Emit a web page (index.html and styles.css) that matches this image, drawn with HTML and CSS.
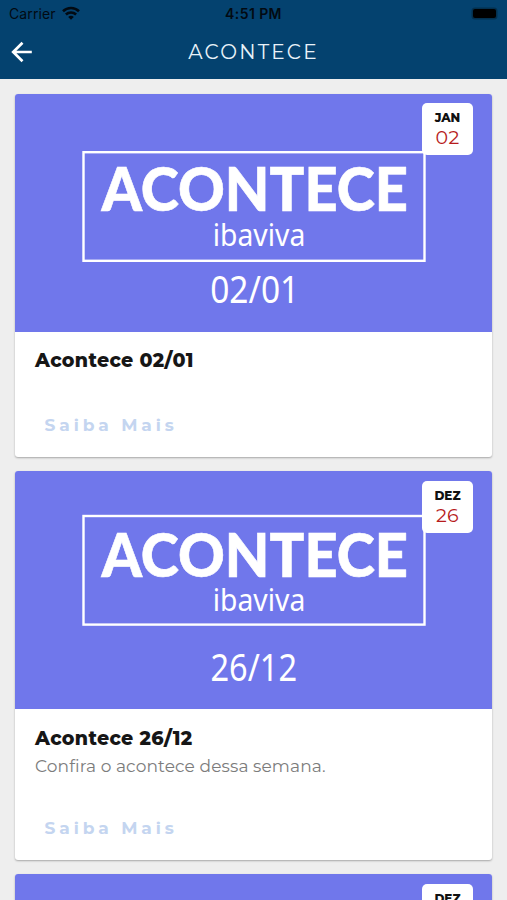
FILE: index.html
```html
<!DOCTYPE html>
<html lang="pt-BR">
<head>
<meta charset="utf-8">
<title>Acontece</title>
<link rel="stylesheet" href="styles.css">
</head>
<body>
<header class="topbar">
  <div class="status">
    <div class="carrier"><span>Carrier</span>
      <svg class="wifi" width="18" height="14" viewBox="0 0 18 14" fill="none" stroke="#020a12" stroke-width="2.6"><path d="M1 5.200C5.500.9 12.500.9 17 5.200M3.900 8.500c2.900-2.700 7.300-2.700 10.200 0"/><path d="M6.200 10.900c1.600-1.500 4-1.500 5.600 0L9 13.700z" fill="#020a12" stroke="none"/></svg>
    </div>
    <span class="time">4:51 PM</span>
    <div class="battery-wrap"><span class="battery"></span></div>
  </div>
  <div class="nav">
    <svg class="back" width="22" height="22" viewBox="0 0 22 22" fill="none" stroke="#fff" stroke-width="2.700"><path d="M20.800 11H2.500M11.500 1.700 2.200 11l9.300 9.300"/></svg>
    <h1 class="title">ACONTECE</h1>
  </div>
</header>
<main class="feed">
  <article class="card">
    <div class="cover">
      <svg class="poster" viewBox="0 0 477 238">
        <rect class="frame" x="68.500" y="58.200" width="341" height="108.600"/>
        <text class="brand" x="86.500" y="117" textLength="306.500" lengthAdjust="spacingAndGlyphs">ACONTECE</text>
        <text class="sub" x="197.800" y="151.500" textLength="92.500" lengthAdjust="spacingAndGlyphs">ibaviva</text>
        <text class="day" x="195.200" y="208.500" textLength="89" lengthAdjust="spacingAndGlyphs">02/01</text>
      </svg>
      <div class="badge"><span class="month">JAN</span><span class="num">02</span></div>
    </div>
    <div class="body">
      <h2 class="name">Acontece 02/01</h2>
      <a class="more">Saiba Mais</a>
    </div>
  </article>
  <article class="card tall">
    <div class="cover">
      <svg class="poster" viewBox="0 0 477 238">
        <rect class="frame" x="68.500" y="45" width="341" height="108.600"/>
        <text class="brand" x="86.500" y="105.500" textLength="306.500" lengthAdjust="spacingAndGlyphs">ACONTECE</text>
        <text class="sub" x="197.800" y="140" textLength="92.500" lengthAdjust="spacingAndGlyphs">ibaviva</text>
        <text class="day" x="195.500" y="209.500" textLength="86.500" lengthAdjust="spacingAndGlyphs">26/12</text>
      </svg>
      <div class="badge"><span class="month">DEZ</span><span class="num">26</span></div>
    </div>
    <div class="body">
      <h2 class="name">Acontece 26/12</h2>
      <p class="desc">Confira o acontece dessa semana.</p>
      <a class="more">Saiba Mais</a>
    </div>
  </article>
  <article class="card">
    <div class="cover">
      <div class="badge"><span class="month">DEZ</span></div>
    </div>
  </article>
</main>
</body>
</html>
```
FILE: styles.css
```css
* { box-sizing: border-box; }
body {
  margin: 0;
  height: 900px;
  overflow: hidden;
  background: #eee;
  font-family: Montserrat, Inter, sans-serif;
}
.topbar { height: 79px; background: #04426f; }
.status {
  height: 27px;
  display: grid;
  grid-template-columns: 1fr auto 1fr;
  align-items: center;
  padding: 0 11px 0 9px;
  color: #020a12;
  font: 14px/27px Inter, sans-serif;
}
.carrier { display: flex; align-items: center; gap: 6px; letter-spacing: .1px; }
.wifi { display: block; margin-top: -1px; }
.time { font-weight: 600; font-size: 14px; letter-spacing: .4px; transform: translateX(1px); }
.battery-wrap { display: flex; justify-content: flex-end; }
.battery {
  width: 23px;
  height: 9px;
  border-radius: 2px;
  background: #000;
  box-shadow: 0 0 0 1.5px #03304f;
}
.nav { height: 50px; display: grid; grid-template-columns: 40px 1fr 40px; align-items: center; }
.back { margin-left: 11px; }
.title {
  margin: 0;
  text-align: center;
  color: #e9f2f9;
  font-size: 20px;
  font-weight: 400;
  letter-spacing: 2.2px;
}
.feed { height: 821px; overflow: hidden; display: flex; flex-direction: column; gap: 14px; padding: 15px; }
.card {
  flex: none;
  height: 363px;
  border-radius: 3px;
  background: #fff;
  box-shadow: 0 1px 2px rgba(0, 0, 0, .3);
}
.tall { height: 389px; }
.cover {
  position: relative;
  height: 238px;
  border-radius: 3px 3px 0 0;
  background: #7077eb;
}
.poster { display: block; width: 477px; height: 238px; fill: #fff; font-family: "Noto Sans", sans-serif; }
.frame { fill: none; stroke: #fff; stroke-width: 2.4; }
.brand { font-family: Lato, sans-serif; font-size: 61.500px; font-weight: 900; stroke: #fff; stroke-width: .6; }
.sub { font-size: 31px; }
.day { font-size: 37.500px; }
.badge {
  position: absolute;
  top: 9px;
  right: 19px;
  width: 51px;
  height: 52px;
  padding-top: 7px;
  border-radius: 5px;
  background: #fff;
  display: flex;
  flex-direction: column;
  align-items: center;
}
.tall .badge, .card:last-child .badge { top: 10px; }
.month { color: #111; font-size: 12px; line-height: 16px; font-weight: 800; }
.num { color: #b71c1c; font-size: 19px; line-height: 24px; letter-spacing: .3px; }
.body { display: flex; flex-direction: column; align-items: flex-start; padding: 16px 20px 0; }
.name { margin: 0; color: #161616; font-size: 19px; line-height: 26px; font-weight: 800; letter-spacing: .33px; }
.tall .name { padding-top: 1px; }
.desc { margin: 2px 0 -1px; color: #7c7c7c; font-size: 17px; line-height: 24px; font-weight: 400; letter-spacing: .11px; }
.more {
  margin: 39px 0 0 9.500px;
  color: #c4d5f0;
  font-size: 17px;
  line-height: 24px;
  font-weight: 700;
  letter-spacing: 3.9px;
}
```
